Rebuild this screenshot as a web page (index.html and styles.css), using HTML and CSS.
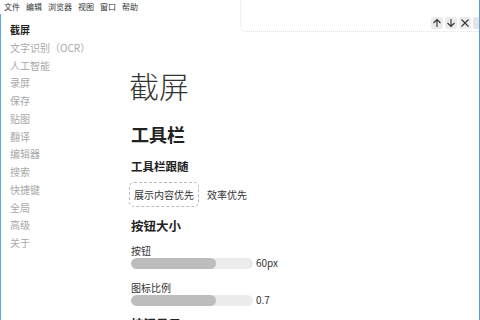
FILE: index.html
```html
<!DOCTYPE html>
<html lang="zh-CN">
<head>
    <meta charset="UTF-8">
    <title>设置</title>
    <link rel="stylesheet" href="styles.css">
</head>
<body>
    <div class="window">
        <div class="menu-bar">
            <span>文件</span>
            <span>编辑</span>
            <span>浏览器</span>
            <span>视图</span>
            <span>窗口</span>
            <span>帮助</span>
        </div>

        <div class="search-panel">
            <div class="search-buttons">
                <span class="search-btn">
                    <svg width="10" height="10" viewBox="0 0 10 10"><path d="M5 9V1.5M1.5 5L5 1.5L8.5 5" fill="none" stroke="#333" stroke-width="1.1"/></svg>
                </span>
                <span class="search-btn">
                    <svg width="10" height="10" viewBox="0 0 10 10"><path d="M5 1v7.5M1.5 5L5 8.5L8.5 5" fill="none" stroke="#333" stroke-width="1.1"/></svg>
                </span>
                <span class="search-btn">
                    <svg width="10" height="10" viewBox="0 0 10 10"><path d="M1.5 1.5L8.5 8.5M8.5 1.5L1.5 8.5" fill="none" stroke="#333" stroke-width="1.1"/></svg>
                </span>
                <span class="search-btn cut"></span>
            </div>
        </div>

        <div class="content">
            <ul class="side-nav">
                <li class="active">截屏</li>
                <li>文字识别（OCR）</li>
                <li>人工智能</li>
                <li>录屏</li>
                <li>保存</li>
                <li>贴图</li>
                <li>翻译</li>
                <li>编辑器</li>
                <li>搜索</li>
                <li>快捷键</li>
                <li>全局</li>
                <li>高级</li>
                <li>关于</li>
            </ul>

            <div class="main">
                <h1 class="page-title">截屏</h1>
                <h2>工具栏</h2>
                <h3>工具栏跟随</h3>
                <div class="options">
                    <span class="option selected">展示内容优先</span>
                    <span class="option">效率优先</span>
                </div>

                <h3 class="size-title">按钮大小</h3>
                <div class="field-label">按钮</div>
                <div class="slider-row">
                    <div class="slider"><div class="slider-fill" style="width: 70%;"></div></div>
                    <span class="slider-value">60px</span>
                </div>
                <div class="field-label second">图标比例</div>
                <div class="slider-row">
                    <div class="slider"><div class="slider-fill" style="width: 70%;"></div></div>
                    <span class="slider-value">0.7</span>
                </div>

                <h3 class="size-title last">按钮显示</h3>
            </div>
        </div>
    </div>
</body>
</html>
```

FILE: styles.css
```css
body {
    margin: 0;
    padding: 0;
    background: white;
    font-family: 'Noto Sans CJK SC', 'Noto Sans', sans-serif;
    color: #222;
    overflow: hidden;
}

.window {
    position: relative;
    height: 100vh;
    box-sizing: border-box;
    border-right: 1px solid #5a9fdc;
    overflow: hidden;
}

.menu-bar {
    height: 14px;
    display: flex;
    align-items: center;
    gap: 6px;
    padding-left: 4px;
    font-size: 8px;
    line-height: 14px;
    color: #333;
}

.search-panel {
    position: absolute;
    top: 0;
    left: 240px;
    right: 0;
    height: 31px;
    border-left: 1px dotted #e2e2e2;
    border-bottom: 1px dotted #e2e2e2;
    border-bottom-left-radius: 6px;
    background: white;
}

.search-buttons {
    position: absolute;
    top: 17px;
    right: 0;
    display: flex;
    gap: 2px;
}

.search-btn {
    width: 12px;
    height: 12px;
    background: #ececec;
    border-radius: 2px;
    display: flex;
    justify-content: center;
    align-items: center;
}

.search-btn.cut {
    width: 6px;
    border-radius: 2px 0 0 2px;
    background: #e4e4e4;
}

.content {
    display: flex;
}

.side-nav {
    list-style: none;
    margin: 0;
    padding: 7px 0 0 9px;
    width: 111px;
    height: 320px;
    border-left: 1px solid #5aa9e6;
    font-size: 10px;
    line-height: 17.75px;
    color: #a8a8a8;
}

.side-nav .active {
    color: #222;
    font-weight: bold;
}

.main {
    padding: 53px 0 0 10px;
}

.page-title {
    margin: 0 0 0 -2px;
    font-size: 30px;
    line-height: 36px;
    font-weight: 300;
    color: #333;
}

h2 {
    margin: 20px 0 0;
    font-size: 18px;
    line-height: 22px;
    font-weight: bold;
}

h3 {
    margin: 13px 0 0;
    font-size: 11.5px;
    line-height: 16px;
    font-weight: bold;
}

.options {
    margin-top: 8px;
    display: flex;
    align-items: center;
    gap: 8px;
    margin-left: -2px;
    font-size: 10px;
    color: #333;
}

.option {
    line-height: 23px;
}

.option.selected {
    padding: 0 4px;
    border: 1px dashed #bbb;
    border-radius: 5px;
}

.size-title {
    margin-top: 10px;
    font-size: 12.5px;
    line-height: 18px;
}

.field-label {
    margin-top: 10px;
    font-size: 10px;
    line-height: 12px;
    color: #333;
}

.field-label.second {
    margin-top: 13px;
}

.slider-row {
    display: flex;
    align-items: center;
    gap: 3px;
}

.slider {
    width: 122px;
    height: 11px;
    background: #ececec;
    border-radius: 6px;
    overflow: hidden;
}

.slider-fill {
    height: 100%;
    background: #bdbdbd;
    border-radius: 6px;
}

.slider-value {
    font-size: 10px;
    line-height: 12px;
    color: #333;
}

.size-title.last {
    margin-top: 9px;
}
```
